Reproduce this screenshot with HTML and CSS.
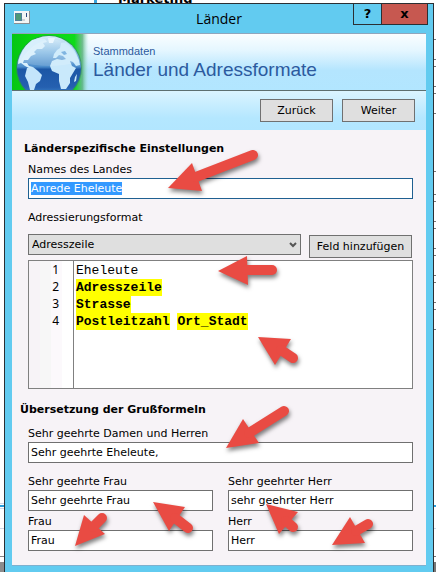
FILE: index.html
```html
<!DOCTYPE html>
<html lang="de">

<head>
    <meta charset="UTF-8">
    <meta name="viewport" content="width=device-width, initial-scale=1.0">
    <title>Länder</title>
    <link rel="stylesheet" href="styles.css">
</head>

<body>
    <!-- application behind the dialog -->
    <div class="behind">
        <span class="behind-tab">Marketing</span>
        <svg class="behind-left" width="4" height="572">
            <path d="M0 503.5h4M0 508.5h4M0 528.5h4" stroke="#cfd8e6" />
            <path d="M0 506h4" stroke="#2a9fdc" stroke-width="2" />
            <path d="M0 556.5h4" stroke="#888" />
            <path d="M0 562h4v10h-4z" fill="#8c8c8c" />
        </svg>
        <svg class="behind-right" width="2" height="572">
            <path d="M0 39.5h2M0 59.5h2M0 66.5h2M0 86.5h2M0 93.5h2M0 113.5h2M0 171.5h2M0 194.5h2M0 201.5h2M0 221.5h2M0 228.5h2M0 248.5h2M0 255.5h2M0 275.5h2M0 282.5h2M0 302.5h2M0 309.5h2M0 329.5h2M0 556.5h2" stroke="#777" />
            <path d="M0 506h2" stroke="#2a9fdc" stroke-width="2" />
            <path d="M0 528.5h2" stroke="#cfd8e6" />
            <path d="M0 562h2v10h-2z" fill="#777" />
        </svg>
    </div>

    <div class="window">
        <div class="titlebar">
            <svg class="app-icon" width="16" height="13" viewBox="0 0 16 13">
                <path d="M0 0h16v13h-16z" fill="#8b8f92" />
                <path d="M0 0h15v12h-15z" fill="#f4f6f5" />
                <path d="M1 2h7v8h-7z" fill="#4e7f9a" />
                <path d="M2 3h5v6h-5z" fill="#4d9a76" />
                <path d="M8 8h3v2h-3z" fill="#cdd2d6" />
                <path d="M12 2h1v4h-1z" fill="#2c4a80" />
            </svg>
            <span class="caption">Länder</span>
            <div class="window-buttons">
                <button class="help" type="button">?</button>
                <button class="close" type="button">x</button>
            </div>
        </div>

        <div class="content">
            <div class="banner">
                <svg class="globe" width="80" height="56" viewBox="0 0 80 56">
                    <defs>
                        <linearGradient id="glow" x1="0" x2="1" y1="0" y2="0">
                            <stop offset="0" stop-color="#06c514" />
                            <stop offset=".3" stop-color="#08d80f" />
                            <stop offset=".78" stop-color="#0ddb1a" />
                            <stop offset=".88" stop-color="#4fae70" stop-opacity=".8" />
                            <stop offset=".96" stop-color="#a5e5d8" stop-opacity="0" />
                        </linearGradient>
                        <linearGradient id="sea" x1="0" x2="0" y1="0" y2="1">
                            <stop offset="0" stop-color="#d9effa" />
                            <stop offset=".25" stop-color="#8cbfe6" />
                            <stop offset=".48" stop-color="#4b8ccb" />
                            <stop offset=".52" stop-color="#1c57a6" />
                            <stop offset=".8" stop-color="#2560b0" />
                            <stop offset="1" stop-color="#4da0dc" />
                        </linearGradient>
                    </defs>
                    <path d="M0 0h80v56h-80z" fill="url(#glow)" />
                    <circle cx="37" cy="34" r="33" fill="#357c6a" opacity=".6" />
                    <circle cx="37" cy="34" r="32" fill="url(#sea)" />
                    <path d="M8 22Q12 12 20 6L27 4L33 5L35 8L31 9L33 12L30 15L25 15L22 18L24 20L19 22L16 26L12 26L11 29L15 29L17 32L21 33L19 35L13 32L9 29L6 30Q6 26 8 22Z" fill="#d8effc" />
                    <path d="M36 4L43 4L41 9L37 9Z" fill="#e8f6fe" />
                    <path d="M15 34L21 33L26 37L30 41L28 47L24 50L22 56L18 56L16 48L13 42Z" fill="#c4e5fb" />
                    <path d="M42 20L45 16L48 14L49 9L54 8Q63 14 67 26L68 31L64 32L61 28L58 27L60 32L64 34L61 39L58 44L58 49L54 55L49 55L47 47L47 40L40 37L38 32L40 27L45 25L50 26L54 25L51 22L47 21L44 24L41 24Z" fill="#c9e9fb" />
                    <path d="M49 18l4-1 2 3-3 1z" fill="#69a8dc" />
                    <path d="M63 43l2-3-1 7-2 1z" fill="#c9e9fb" />
                    <path d="M8 28Q20 7 40 5Q59 7 67 28Q37 36 8 28Z" fill="#fff" opacity=".15" />
                </svg>
                <div class="banner-text">
                    <p class="banner-sub">Stammdaten</p>
                    <h1>Länder und Adressformate</h1>
                </div>
            </div>
            <div class="toolbar">
                <button class="btn nav" type="button">Zurück</button>
                <button class="btn nav" type="button">Weiter</button>
            </div>

            <form class="form">
                <h2 class="first">Länderspezifische Einstellungen</h2>
                <div class="fields">
                    <div class="field">
                        <label for="land">Names des Landes</label>
                        <input class="text" id="land" type="text" value="Anrede Eheleute">
                    </div>
                    <div class="format">
                        <label for="feld">Adressierungsformat</label>
                        <div class="format-row">
                            <div class="select">
                                <select id="feld">
                                    <option>Adresszeile</option>
                                    <option>Strasse</option>
                                    <option>Postleitzahl</option>
                                    <option>Ort_Stadt</option>
                                </select>
                                <svg class="chevron" width="8" height="8" viewBox="0 0 8 8">
                                    <path d="M1 2L4 5L7 2" fill="none" stroke="#555" stroke-width="2" />
                                </svg>
                            </div>
                            <button class="btn add" type="button">Feld hinzufügen</button>
                        </div>
                    </div>
                    <div class="editor">
                        <div class="numbers">
                            <div>1</div>
                            <div>2</div>
                            <div>3</div>
                            <div>4</div>
                        </div>
                        <div class="code" contenteditable="true" role="textbox" aria-multiline="true" aria-label="Adressierungsformat" spellcheck="false">
                            <div>Eheleute</div>
                            <div><mark>Adresszeile</mark></div>
                            <div><mark>Strasse</mark></div>
                            <div><mark>Postleitzahl</mark> <mark>Ort_Stadt</mark></div>
                        </div>
                    </div>
                </div>

                <h2>Übersetzung der Grußformeln</h2>
                <div class="fields greetings">
                    <div class="field">
                        <label for="alle">Sehr geehrte Damen und Herren</label>
                        <input class="text" id="alle" type="text" value="Sehr geehrte Eheleute,">
                    </div>
                    <div class="pairs">
                        <div class="field">
                            <label for="sgf">Sehr geehrte Frau</label>
                            <input class="text" id="sgf" type="text" value="Sehr geehrte Frau">
                        </div>
                        <div class="field">
                            <label for="sgh">Sehr geehrter Herr</label>
                            <input class="text" id="sgh" type="text" value="sehr geehrter Herr">
                        </div>
                        <div class="field">
                            <label for="frau">Frau</label>
                            <input class="text" id="frau" type="text" value="Frau">
                        </div>
                        <div class="field">
                            <label for="herr">Herr</label>
                            <input class="text" id="herr" type="text" value="Herr">
                        </div>
                    </div>
                </div>
            </form>
        </div>
    </div>

    <!-- annotation arrows -->
    <svg class="arrows" width="436" height="572" viewBox="0 0 436 572">
        <path d="M168 188L192 163L202 191Z" />
        <path class="shaft" d="M196 177L253 155" />
        <path d="M218 271L247 256L248 285Z" />
        <path class="shaft" d="M246 270L272 270" />
        <path d="M258 337L291 339L275 365Z" />
        <path class="shaft" d="M281 350L293 358" />
        <path d="M226 448L243 419L259 443Z" />
        <path class="shaft" d="M249 433L284 411" />
        <path d="M153 502L185 507L169 531Z" />
        <path class="shaft" d="M175 518L188 528" />
        <path d="M75 546L84 515L105 534Z" />
        <path class="shaft" d="M93 527L102 518" />
        <path d="M266 504L298 512L279 534Z" />
        <path class="shaft" d="M286 521L293 527" />
        <path d="M332 545L350 517L365 543Z" />
        <path class="shaft" d="M356 531L368 524" />
    </svg>

    <script>
        var land = document.querySelector("#land")
        land.focus()
        land.select()
    </script>
</body>

</html>
```
FILE: styles.css
```css
* {
    margin: 0;
    padding: 0;
    box-sizing: border-box;
}

body {
    position: relative;
    overflow: hidden;
    background-color: #fff;
    font: 11px/17px "DejaVu Sans", Verdana, sans-serif;
    color: #000;
}

button,
input,
select {
    font: inherit;
    color: inherit;
    border-radius: 0;
    outline: none;
}

/* background application */
.behind {
    position: absolute;
    top: 0;
    left: 0;
    right: 0;
    height: 572px;
}

.behind-tab {
    position: absolute;
    top: -11px;
    left: 94px;
    padding-left: 21px;
    border-left: 3px solid #3aa3dc;
    font-size: 13px;
    line-height: 20px;
    font-weight: bold;
}

.behind-left,
.behind-right {
    position: absolute;
    top: 0;
}

.behind-left {
    left: 0;
}

.behind-right {
    right: 0;
}

/* dialog */
.window {
    position: relative;
    margin: 3px 2px 0 4px;
    padding: 0 7px 14px;
    border: 1px solid #2b2f33;
    background-color: #62cbf0;
}

.titlebar {
    display: grid;
    grid-template-columns: 1fr auto 1fr;
    height: 29px;
}

.app-icon {
    margin: 7px 0 0 2px;
}

.caption {
    font: 14px/29px "Open Sans", "Segoe UI", sans-serif;
}

.window-buttons {
    display: flex;
    justify-content: flex-end;
    height: 21px;
    margin-right: -2px;
}

.window-buttons button {
    border: 1px solid #2b2f33;
    border-top: 0;
    font-size: 13px;
    line-height: 18px;
    font-weight: bold;
}

.window-buttons .help {
    width: 28px;
    border-right: 0;
    background-color: #62cbf0;
}

.window-buttons .close {
    width: 47px;
    background-color: #c75850;
}

.content {
    border-top: 1px solid #8fa6bd;
    border-bottom: 1px solid #7fb0cf;
    background-color: #f7f3f7;
}

.banner {
    display: flex;
    height: 57px;
    border-bottom: 1px solid #5d6f70;
    background: linear-gradient(#fafeff, #e4f6ff 30%, #b4e5fe 65%, #b2e6ff);
}

.banner-text {
    padding: 9px 0 0 1px;
    font-family: "Liberation Sans", Arial, sans-serif;
    color: #2c5a9e;
}

.banner-sub {
    font-size: 11px;
    line-height: 16px;
}

.banner h1 {
    font-size: 19px;
    line-height: 22px;
    font-weight: normal;
}

.toolbar {
    display: flex;
    justify-content: flex-end;
    gap: 9px;
    height: 39px;
    padding: 8px 11px;
    background: linear-gradient(#dbf4ff, #b4e7ff 70%, #b2e6ff);
}

.btn {
    height: 23px;
    border: 1px solid #707070;
    background-color: #dfdfdf;
}

.nav {
    width: 73px;
}

.form {
    padding: 11px 13px 14px 8px;
}

h2 {
    font-size: 11px;
    line-height: 16px;
}

h2.first {
    margin: 0 0 4px 4px;
}

.fields {
    display: flex;
    flex-direction: column;
    gap: 10px;
    margin-left: 8px;
}

.fields label {
    display: block;
}

.greetings {
    margin-top: 7px;
}

.text {
    display: block;
    width: 100%;
    height: 21px;
    padding: 0 2px;
    border: 1px solid #707070;
    background-color: #fff;
}

.text:focus {
    border-color: #1f6091;
}

.text::selection {
    background-color: #3399ff;
    color: #fff;
}

.format-row {
    display: flex;
    gap: 8px;
    margin-top: 8px;
    padding-right: 1px;
}

.select {
    position: relative;
    flex: 1;
}

.select select {
    width: 100%;
    height: 21px;
    padding: 0 20px 0 3px;
    border: 1px solid #707070;
    background-color: #dfdfdf;
    appearance: none;
}

.chevron {
    position: absolute;
    top: 7px;
    right: 4px;
}

.add {
    width: 103px;
    margin-top: 1px;
}

.editor {
    display: flex;
    height: 129px;
    margin: -8px 0 13px;
    border: 1px solid #808080;
    background-color: #fff;
    font: 13px/17px "Liberation Mono", "Courier New", monospace;
}

.numbers {
    width: 45px;
    padding-right: 14px;
    border-right: 1px solid #808080;
    background: linear-gradient(to right, #f7f3f7 25%, #f7f7f7 25%, #f7f7f7 50%, #fcf9fc 50%, #fcf9fc 75%, #fff 75%);
    font: 12px/17px "Noto Sans", "Open Sans", sans-serif;
    text-align: right;
}

.code {
    flex: 1;
    padding: 1px 2px;
    outline: none;
}

.code mark {
    padding: 1px 0;
    background-color: #ff0;
    color: #000;
    font-weight: bold;
}

.pairs {
    display: grid;
    grid-template-columns: 1fr 1fr;
    column-gap: 15px;
    row-gap: 2px;
}

/* arrows lie over the dialog */
.arrows {
    position: absolute;
    top: 0;
    left: 0;
    pointer-events: none;
    fill: #e94b43;
    filter: drop-shadow(1px 3px 2px rgba(0, 0, 0, .5));
}

.arrows .shaft {
    fill: none;
    stroke: #e94b43;
    stroke-width: 10px;
    stroke-linecap: round;
}
```
